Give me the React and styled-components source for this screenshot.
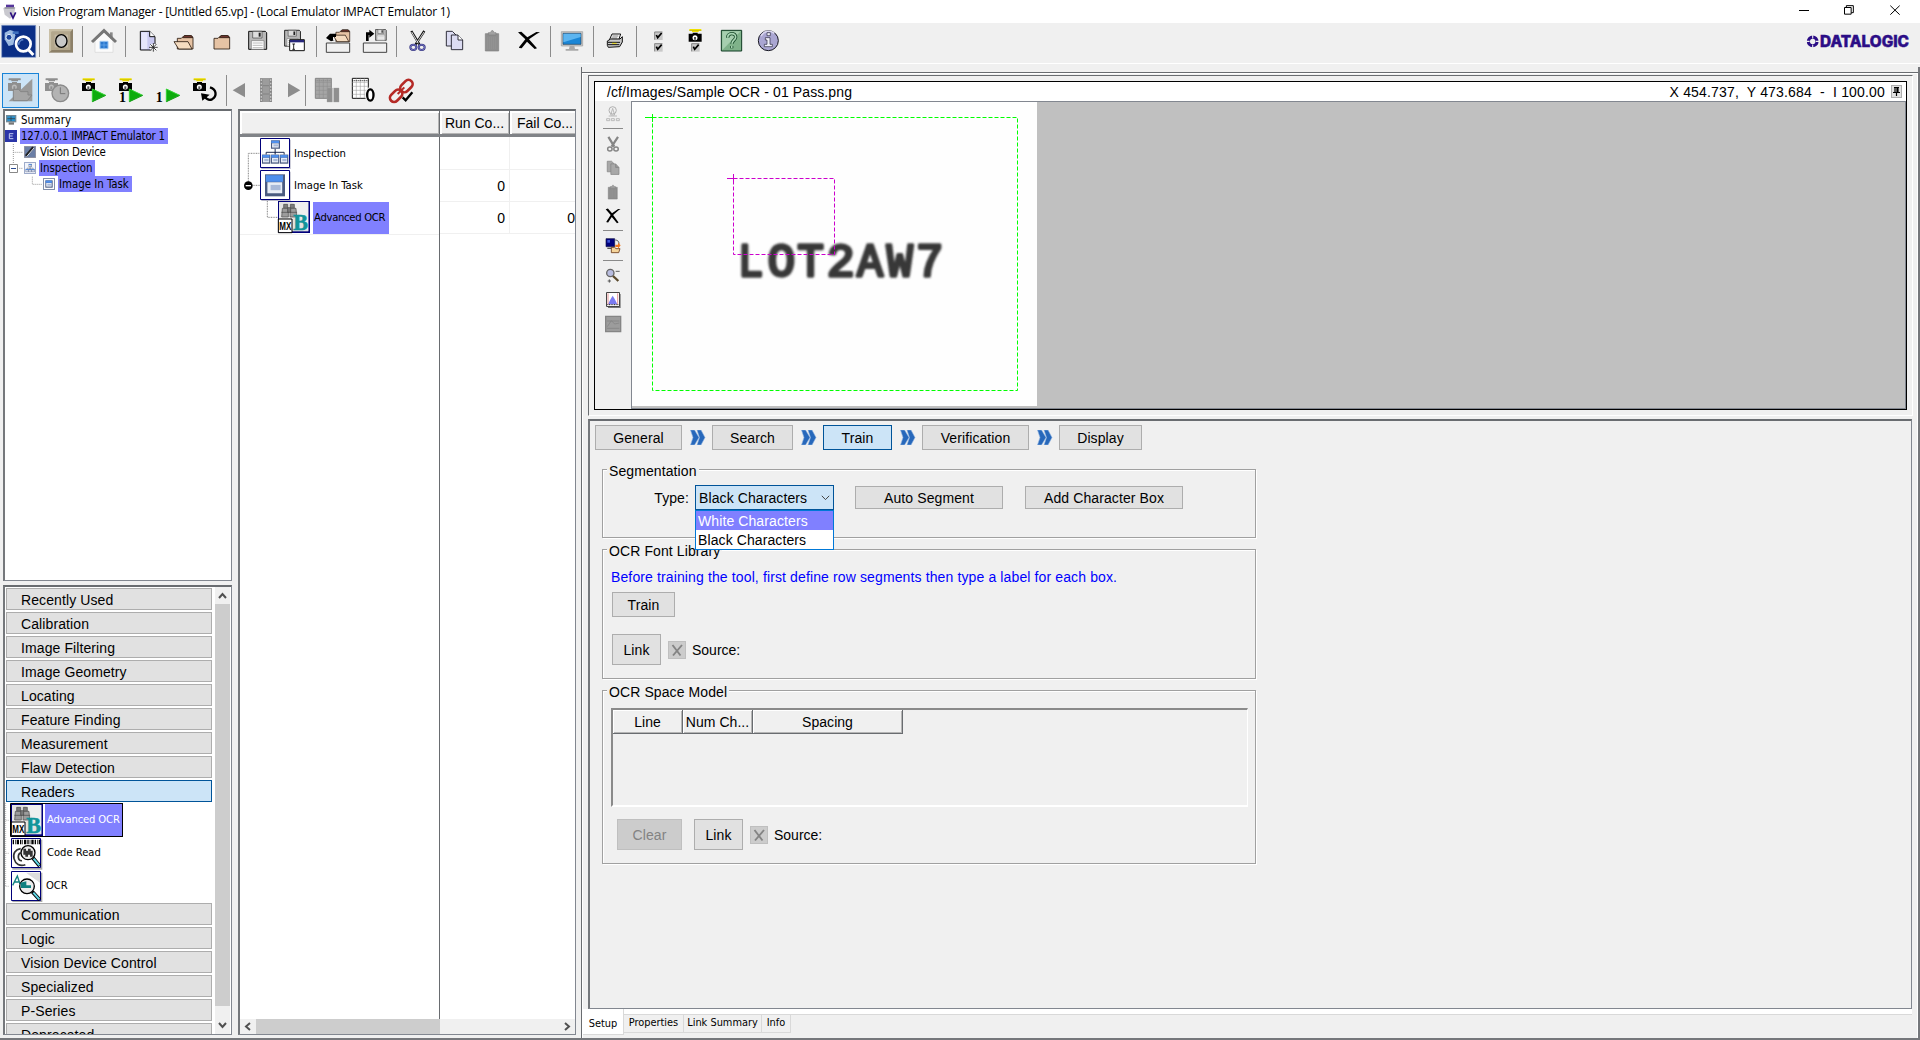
import React from "react";
import styled, { createGlobalStyle, css } from "styled-components";

const Global = createGlobalStyle`
  *, *::before, *::after { box-sizing: border-box; }
  body { margin: 0; background: #f0f0f0; overflow: hidden; }
  svg { display: block; flex: none; }
`;

const arial = `"Liberation Sans", Arial, sans-serif`;
const tahoma = `"DejaVu Sans Condensed", "DejaVu Sans", Tahoma, sans-serif`;

/* ---------- frame ---------- */
const Window = styled.div`
  width: 1920px; height: 1040px; display: flex; flex-direction: column;
  background: #f0f0f0; color: #000; font: 14px/18px ${arial}; white-space: nowrap; overflow: hidden;
`;
const TitleBar = styled.header`
  height: 23px; flex: none; background: #fff; display: flex; align-items: center; padding-left: 3px;
`;
const TitleText = styled.div`
  flex: 1; margin-left: 4px; font: 12px/16px "Open Sans", "Noto Sans", sans-serif; letter-spacing: -0.235px;
`;
const MainBar = styled.div`
  height: 41px; flex: none; display: flex; align-items: flex-start; padding: 1px 8px 0 0; border-bottom: 1px solid #fff;
`;
const Logo = styled.svg`margin-top: 10px;`;
const Spacer = styled.div`flex: 1;`;
const Separator = styled.i`
  width: 6px; height: 31px; flex: none; margin-top: ${(p) => p.$top || 0}px;
  border-left: 2px solid transparent; background: linear-gradient(90deg, #8c8c8c 1px, transparent 1px) padding-box;
`;
const Body = styled.div`flex: 1; min-height: 0; display: flex; border-bottom: 2px solid #75777b;`;
const LeftSide = styled.div`width: 581px; flex: none; display: flex; flex-direction: column; padding-left: 3px;`;
const RunBar = styled.div`
  height: 45px; flex: none; display: flex; align-items: flex-start; padding-top: 9px; margin-left: -1px;
`;
const RunButton = styled.div`
  height: 35px; flex: none;
  ${(p) => p.$on && css`background: #cce4f7; box-shadow: inset 0 0 0 1px #1883d7;`}
`;
const Panes = styled.div`flex: 1; min-height: 0; display: flex; gap: 6px;`;
const Column = styled.div`width: 229px; display: flex; flex-direction: column; gap: 4px; padding-bottom: 3px;`;
const Sunken = styled.div`
  background: #fff; border: 1px solid #828790; border-top: 2px solid #696c70; border-left: 2px solid #75787c;
  overflow: hidden;
`;

/* ---------- project tree ---------- */
const TreePane = styled(Sunken)`height: 472px; flex: none; display: flex; padding: 1px 0 0 0;`;
const TreeRow = styled.div`height: 16px; display: flex; align-items: center; padding-left: ${(p) => p.$indent}px;`;
const TreeLabel = styled.span`
  height: 16px; padding: 0 3px 0 1px; margin-left: 3px; font: 11.4px/16px ${tahoma};
  letter-spacing: ${(p) => p.$ls || 0}px;
  background: ${(p) => (p.$on ? "#8080ff" : "transparent")};
`;
const TreeBody = styled.div`flex: 1; display: flex; flex-direction: column;`;
const TreeLines = styled.div`width: 0; height: 0; overflow: visible;`;

/* ---------- toolbox ---------- */
const ToolPane = styled(Sunken)`flex: 1; min-height: 0; display: flex;`;
const ToolList = styled.div`
  width: 208px; padding: 1px 0 0 1px; display: flex; flex-direction: column; gap: 2px; overflow: hidden;
`;
const Category = styled.div`
  height: 22px; flex: none; width: 206px; padding-left: 14px; line-height: 22px; letter-spacing: 0.1px;
  background: ${(p) => (p.$on ? "#cce4f7" : "#e1e1e1")};
  border: 1px solid ${(p) => (p.$on ? "#005499" : "#adadad")};
`;
const Tools = styled.div`height: 99px; flex: none; display: flex; margin: -1px 0 -1px -1px;`;
const ToolNames = styled.div`display: flex; flex-direction: column;`;
const ToolName = styled.div`
  height: 33px; display: flex; align-items: center; font: 11.1px/16px ${tahoma}; padding-left: ${(p) => p.$left || 2}px;
  ${(p) => p.$on && css`
    height: 34px; width: 78px; color: #fff; background: #8080ff; border: 1px solid #000; border-left: 0;
    letter-spacing: -0.12px;
  `}
`;
const VScroll = styled.div`
  width: 15px; margin-left: 2px; background: #f0f0f0; display: flex; flex-direction: column; align-items: stretch;
`;
const VThumb = styled.div`height: 402px; background: #cdcdcd;`;

/* ---------- task table ---------- */
const TaskPane = styled(Sunken)`width: 338px; display: flex; flex-direction: column; margin-bottom: 3px;`;
const TaskHead = styled.div`
  height: 26px; flex: none; display: flex; border-bottom: 3px solid #808387; background: #f0f0f0;
`;
const HeadCell = styled.div`
  width: ${(p) => p.$w}px; flex: none; padding: 3px 0 0 ${(p) => p.$left || 0}px; text-align: ${(p) => p.$align || "center"};
  border-right: 1px solid #696c70; box-shadow: inset 1px 1px #fff, inset 2px 2px #fff, inset -1px -1px #b5b5b5; overflow: hidden;
`;
const TaskGrid = styled.div`flex: 1; display: flex;`;
const TaskCol = styled.div`
  width: ${(p) => p.$w}px; flex: none; display: flex; flex-direction: column;
  border-right: ${(p) => (p.$line ? "1px solid #696c70" : "0")};
`;
const TaskTree = styled.div`display: flex; height: 98px; border-bottom: 1px solid #f0f0f0;`;
const TaskNames = styled.div`display: flex; flex-direction: column; padding-top: 1px;`;
const TaskName = styled.div`
  height: 32px; flex: none; display: flex; align-items: center; font: 11.2px/16px ${tahoma}; margin-left: ${(p) => p.$left}px;
  ${(p) => p.$on && css`width: 76px; padding-left: 1px; background: #8080ff; letter-spacing: -0.3px;`}
`;
const NumCell = styled.div`
  height: ${(p) => p.$h || 32}px; padding: 1px 4px 0 0; display: flex; align-items: center; justify-content: flex-end;
  border-bottom: 1px solid #f0f0f0; border-right: ${(p) => (p.$edge ? "1px solid #f0f0f0" : "0")};
`;
const HScroll = styled.div`height: 15px; flex: none; background: #f0f0f0; display: flex;`;
const HThumb = styled.div`width: 184px; background: #cdcdcd;`;

/* ---------- right side ---------- */
const RightSide = styled.div`
  flex: 1; margin-top: 3px; border-left: 1px solid #696c70; border-right: 2px solid #75777b; padding-top: 5px; display: flex;
`;
const RightInner = styled.div`
  flex: 1; border-top: 1px solid #696c70; box-shadow: inset 1px 1px #fff, inset -1px 0 #fff; display: flex; flex-direction: column;
`;
const ImageFrame = styled.div`
  height: 341px; flex: none; margin: 2px 5px 0 6px; padding: 5px; border-left: 1px solid #696c70; border-top: 1px solid #696c70;
  border-right: 1px solid #fff; border-bottom: 1px solid #fff;
`;
const ImageBox = styled.div`
  width: 1313px; height: 329px; border: 1px solid #000; display: flex; flex-direction: column; background: #fff;
`;
const ImageTitle = styled.div`height: 19px; flex: none; display: flex; align-items: center; padding: 0 4px 0 12px;`;
const ImagePath = styled.span`letter-spacing: 0.11px;`;
const Coords = styled.div`margin-left: auto; margin-right: 6px; white-space: pre; letter-spacing: 0.17px;`;
const PinBox = styled.div`width: 11px; height: 13px; background: #e1e1e1; border: 1px solid #adadad;`;
const ImageBody = styled.div`flex: 1; display: flex; min-height: 0;`;
const ImageTools = styled.div`width: 36px; background: #f0f0f0; display: flex; flex-direction: column;`;
const Viewport = styled.div`flex: 1; background: #c0c0c0; border: 1px solid #828790;`;

const Editor = styled.div`
  height: 590px; flex: none; margin: 3px 6px 0 6px; border: 1px solid #828790; border-left: 2px solid #75787c; border-top: 2px solid #696c70;
  padding: 4px 0 0 5px;
`;
const Steps = styled.div`display: flex; height: 25px; align-items: center;`;
const Button = styled.div`
  width: ${(p) => p.$w}px; height: ${(p) => p.$h || 25}px; flex: none; display: flex; align-items: center; justify-content: center;
  margin-left: ${(p) => p.$left || 0}px; background: #e1e1e1; border: 1px solid #adadad; letter-spacing: 0.1px;
  ${(p) => p.$on && css`background: #cce4f7; border-color: #005499;`}
  ${(p) => p.$off && css`background: #cccccc; border-color: #bfbfbf; color: #838383;`}
`;
const Group = styled.section`
  width: 654px; height: ${(p) => p.$h}px; margin: ${(p) => p.$top}px 0 0 7px; border: 1px solid #a0a0a0;
  box-shadow: 1px 1px #fff, inset 1px 1px #fff; display: flex; flex-direction: column; align-items: flex-start;
`;
const Legend = styled.div`
  height: 18px; flex: none; margin: -9px 0 0 4px; padding: 1px 2px 0; background: #f0f0f0; letter-spacing: 0.1px;
`;
const Row = styled.div`
  display: flex; align-items: center; flex: none; height: ${(p) => p.$h}px; margin: ${(p) => p.$top}px 0 0 ${(p) => p.$left || 0}px;
`;
const TypeLabel = styled.span`width: 86px; text-align: right; margin-right: 6px; letter-spacing: 0.1px;`;
const Select = styled.div`
  position: relative; width: 139px; height: 25px; background: #cce4f7; border: 1px solid #005499;
  display: flex; align-items: center; justify-content: space-between; padding: 0 3px 0 3px; letter-spacing: 0.1px;
`;
const Popup = styled.div`
  position: absolute; left: -1px; top: 24px; width: 139px; border: 1px solid #0078d7; background: #fff; z-index: 2;
`;
const Option = styled.div`
  height: 19px; line-height: 20px; padding-left: 2px;
  ${(p) => p.$on && css`background: #8080ff; color: #fff;`}
`;
const Hint = styled.div`height: 18px; margin: 9px 0 0 8px; color: #0000ff; letter-spacing: 0.125px;`;
const ClearBox = styled.div`
  width: 18px; height: 18px; margin: 0 6px 0 7px; background: #ccc; border: 1px solid #bfbfbf;
`;
const SpaceTable = styled.div`
  width: 637px; height: 99px; margin: 8px 0 0 8px; border-top: 2px solid #8a8a8a; border-left: 2px solid #8a8a8a;
  border-right: 1px solid #fff; border-bottom: 2px solid #fff; display: flex; align-items: flex-start;
`;
const SpaceHead = styled.div`
  width: ${(p) => p.$w}px; height: 24px; padding-top: 3px; text-align: center; overflow: hidden; letter-spacing: 0.05px;
  border-right: 1px solid #696c70; border-bottom: 1px solid #696c70;
  box-shadow: inset 1px 1px #fff, inset -1px -1px #b5b5b5;
`;
const Tabs = styled.div`
  height: 29px; flex: none; display: flex; align-items: flex-start; margin: 0 6px 0 1px;
  background: linear-gradient(#fff 5px, #d9d9d9 5px, #d9d9d9 6px, transparent 6px);
`;
const Tab = styled.div`
  width: ${(p) => p.$w}px; height: 19px; margin-top: 5px; border: 1px solid #d9d9d9; border-left: 0; text-align: center;
  font: 10.9px/16px ${tahoma};
  ${(p) => p.$on && css`height: 26px; margin-top: 0; padding-top: 7px; background: #fff; border-top: 0;`}
`;

/* ---------- icons: one drawing unit is a third of a pixel ---------- */
const Art = ({ x, y, w, h, children, ...rest }) => (
  <svg width={w} height={h} viewBox={`${x} ${y} ${w * 3} ${h * 3}`} {...rest}>{children}</svg>
);
const BarIcon = ({ x, children }) => <Art x={x} y={72} w={37} h={35}>{children}</Art>;

const Camera = ({ x, y, gray }) => (
  <g transform={`translate(${x} ${y})`}>
    <path d="M2 0h36v5h-8v4h-20v-4H2z" fill={gray ? "#8f8f8f" : "#f0e000"} />
    <path d="M2 3h36v3H2z" fill={gray ? "#8f8f8f" : "#b0a800"} opacity=".6" />
    <path d="M0 14h12v-3h15v3h12v24H0z" fill={gray ? "#8f8f8f" : "#000"} />
    <circle cx="19" cy="26" r="7.5" fill={gray ? "#bdbdbd" : "#fff"} />
    <path d="M16 24h6v8h-6z" fill={gray ? "#8f8f8f" : "#555"} />
  </g>
);
const Play = ({ x, y }) => (
  <g>
    <path d={`M${x} ${y}v38l40-19z`} fill="#0dac0d" stroke="#32d232" strokeWidth="3" />
    <path d={`M${x} ${y + 38}l40-19`} stroke="#0a7d0a" strokeWidth="2" />
  </g>
);
const Folder = ({ x, y, open }) => (
  <g transform={`translate(${x} ${y})`} stroke="#2a1a10" strokeWidth="2.5" strokeLinejoin="round">
    <path d="M2 42V10h12l8-8h20l7 5v35z" fill="#e6c3a4" />
    <path d="M24 2h21l3 6H18z" fill="#7a3a34" />
    {open && <path d="M-8 20h42l12 22H6z" fill="#f5dcc0" />}
  </g>
);
const Floppy = ({ x, y, s = 1 }) => (
  <g transform={`translate(${x} ${y}) scale(${s})`}>
    <path d="M1 1h50l4 4v50H1z" fill="#b8b8b8" stroke="#111" strokeWidth="3" />
    <path d="M13 1h28v20H13z" fill="#dedede" stroke="#444" strokeWidth="2" />
    <path d="M31 5h6v12h-6z" fill="#222" />
    <path d="M9 29h38v26H9z" fill="#fff" stroke="#777" strokeWidth="2" />
    <path d="M13 36h30M13 43h30M13 50h30" stroke="#999" strokeWidth="2" />
  </g>
);
const Check = ({ x, y }) => (
  <g transform={`translate(${x} ${y})`}>
    <path d="M0 0h25v25H0z" fill="#c8c8c8" />
    <path d="M1 24V1h23" fill="none" stroke="#888" strokeWidth="3" />
    <path d="M6 10l4 8L22 4" fill="none" stroke="#000" strokeWidth="5" />
  </g>
);
const Scissors = ({ x, y, s = 1, gray }) => (
  <g transform={`translate(${x} ${y}) scale(${s})`} fill="none" stroke={gray ? "#858585" : "#111"}>
    <path d="M7 2l24 40M46 2L20 42" strokeWidth={gray ? 9 : 7} />
    {!gray && <path d="M8 5l20 34M45 5L23 38" stroke="#fff" strokeWidth="2.5" />}
    <ellipse cx="13" cy="51" rx="9" ry="8" stroke={gray ? "#858585" : "#30307c"} strokeWidth="6" />
    <ellipse cx="38" cy="51" rx="9" ry="8" stroke={gray ? "#858585" : "#30307c"} strokeWidth="6" />
    {!gray && <><ellipse cx="13" cy="51" rx="9" ry="8" stroke="#9a9ae6" strokeWidth="2" /><ellipse cx="38" cy="51" rx="9" ry="8" stroke="#9a9ae6" strokeWidth="2" /></>}
  </g>
);
const Copy = ({ x, y, s = 1, gray }) => (
  <g transform={`translate(${x} ${y}) scale(${s})`} fill={gray ? "#a8a8a8" : "#dcdcf2"} stroke={gray ? "#808080" : "#22222e"} strokeWidth="2.8">
    <path d="M1 1h18l12 12v32H1z" />
    <path d="M16 12h20l14 15v29H16z" />
    <path d="M36 12v15h14" fill={gray ? "#999" : "#fff"} />
  </g>
);
const Paste = ({ x, y, s = 1 }) => (
  <g transform={`translate(${x} ${y}) scale(${s})`} fill="#8e8e8e" stroke="#808080" strokeWidth="2">
    <path d="M1 10h40v52H1z" />
    <path d="M10 14V7h6l4-6h4l4 6h5v7z" fill="#a2a2a2" />
    <path d="M8 20v36M14 20v36M20 20v36M26 20v36M32 20v36" stroke="#9b9b9b" strokeWidth="1.5" />
  </g>
);
const Cross = ({ x, y, s = 1, sx = s }) => (
  <g transform={`translate(${x} ${y}) scale(${sx} ${s})`} fill="#000">
    <path d="M0 3l10-2 18 17L55 2l11 1-9 4-24 17 24 27-7 2-23-22L11 51l-7-1-1-2 19-24z" />
  </g>
);
const BlueWindow = ({ x, y, w, h }) => (
  <g>
    <rect x={x} y={y} width={w} height={h} fill="#4a5a80" />
    <rect x={x + w * 0.04} y={y + h * 0.04} width={w * 0.86} height={h * 0.3} fill="#4f8fec" />
    <rect x={x + w * 0.12} y={y + h * 0.36} width={w * 0.74} height={h * 0.5} fill="#e8edf6" />
    <rect x={x + w * 0.28} y={y + h * 0.48} width={w * 0.5} height={h * 0.24} fill="#a9b9d8" />
  </g>
);
const Network = ({ x, y, w, h }) => (
  <g transform={`translate(${x} ${y}) scale(${w / 80} ${h / 76})`}>
    <path d="M41 28v14M13 46v-7h56v7M41 39v7" stroke="#16224a" fill="none" strokeWidth="3" />
    <BlueWindow x={28} y={2} w={28} h={26} />
    <BlueWindow x={0} y={46} w={26} h={28} />
    <BlueWindow x={28} y={46} w={26} h={28} />
    <BlueWindow x={56} y={46} w={26} h={28} />
  </g>
);
const AdvancedArt = ({ x, y }) => (
  <g transform={`translate(${x} ${y})`}>
    <path d="M0 0h96v96H0z" fill="#00007a" />
    <path d="M3 3h88v88H3z" fill="#e3e3e3" />
    <path d="M42 3h49v88z" fill="#f4f4f4" opacity=".7" />
    <g fill="#7c7c7c" stroke="#484848" strokeWidth="2">
      <path d="M17 10h12v12H17zM37 10h12v12H37z" />
      <path d="M13 22h18v26H11zM36 22h18l2 26H36z" fill="#9c9c9c" />
      <path d="M29 20h9v14h-9z" />
      <path d="M10 34h22M35 34h22" />
    </g>
    <text x="46" y="86" fontFamily="Liberation Serif, serif" fontWeight="700" fontSize="72" fill="#12949a" stroke="#12949a" strokeWidth="2" textLength="44" lengthAdjust="spacingAndGlyphs">B</text>
    <path d="M1 54h41v41H1z" fill="#fff" stroke="#000" strokeWidth="3" />
    <text x="4" y="88" fontFamily="Liberation Sans, sans-serif" fontWeight="700" fontSize="33" fill="#000" textLength="36" lengthAdjust="spacingAndGlyphs">MX</text>
  </g>
);
const Stepper = () => (
  <svg width="30" height="15" viewBox="0 0 30 15">
    <path d="M8.500 0h4l4.500 7.500-4.500 7.500h-4l2.500-7.500zM15 0h4l4 7.500-4 7.500h-4l2.500-7.500z" fill="#2768bb" stroke="#8fb4e0" strokeWidth=".6" />
  </svg>
);

const MainIcons = () => (
  <MainBar>
    <BarIcon x={0}>
      <path d="M5 76h102v96H5z" fill="#0b2f86" stroke="#89a0cc" strokeWidth="2" />
      <path d="M14 98l16-8 12 4 4 12-6 28-14 4-12-20z" fill="#9cbbe2" />
      <path d="M38 94h18v8H38z" fill="#3f70be" />
      <circle cx="27" cy="112" r="9" fill="#1b449c" stroke="#d8e6f8" strokeWidth="3" />
      <circle cx="70" cy="132" r="22" fill="#0b2f86" stroke="#fff" strokeWidth="8" />
      <path d="M56 134a15 15 0 0 1 14-15" fill="none" stroke="#5b82c6" strokeWidth="5" />
      <path d="M86 150l14 15" stroke="#fff" strokeWidth="9" />
    </BarIcon>
    <Separator $top={2} />
    <BarIcon x={129}>
      <path d="M147 87h72v71h-72z" fill="#8c8068" />
      <path d="M147 87h72l-8 8h-56v55l-8 8z" fill="#c9bfa6" />
      <path d="M155 95h56v55h-56z" fill="#b3a78d" />
      <path d="M164 104h40v38h-40z" fill="#c4baa6" />
      <ellipse cx="184" cy="123" rx="17" ry="19" fill="#c8c8c8" stroke="#000" strokeWidth="4" />
    </BarIcon>
    <Separator $top={2} />
    <BarIcon x={258}>
      <path d="M285 122l27-26 27 26v35h-54z" fill="#fbfbfb" stroke="#d5d5d5" strokeWidth="2" />
      <path d="M330 97h8v18h-8z" fill="#888" />
      <path d="M276 126l36-34 36 34" fill="none" stroke="#777" strokeWidth="9" />
      <path d="M300 124h24v22h-24z" fill="#2b79cf" stroke="#9cc4ee" strokeWidth="3" />
      <path d="M312 124v22M300 135h24" stroke="#6fb0f0" strokeWidth="2" />
    </BarIcon>
    <Separator $top={2} />
    <BarIcon x={387}>
      <path d="M421 94h28l16 16v40h-44z" fill="#c9c9f0" stroke="#111" strokeWidth="3" />
      <path d="M424 97h18v50h-18z" fill="#e6e6fb" />
      <path d="M449 94v16h16" fill="#fff" stroke="#111" strokeWidth="3" />
      <circle cx="460" cy="142" r="11" fill="#fff" />
      <path d="M460 129v26M447 142h26M451 133l18 18M469 133l-18 18" stroke="#222" strokeWidth="2.6" />
    </BarIcon>
    <BarIcon x={498}><Folder x={530} y={105} open /></BarIcon>
    <BarIcon x={609}><Folder x={640} y={105} /></BarIcon>
    <BarIcon x={720}><Floppy x={745} y={93} /></BarIcon>
    <BarIcon x={831}>
      <Floppy x={853} y={90} s={0.88} />
      <path d="M869 119h44v33h-44z" fill="#fff" stroke="#111" strokeWidth="3" />
      <path d="M870 120h42v7h-42z" fill="#26267a" />
      <path d="M881 132v16M877 132h8M877 148h8" stroke="#000" strokeWidth="2.5" />
    </BarIcon>
    <Separator $top={2} />
    <BarIcon x={960}>
      <g transform="translate(1006 88) scale(.88)"><Folder x={0} y={0} open /></g>
      <path d="M979 129h70v28h-70z" fill="#f0f0f0" stroke="#444" strokeWidth="3" />
      <path d="M978 114l12-13h18v10h-9v10h5l-11 3z" fill="#000" />
    </BarIcon>
    <BarIcon x={1071}>
      <Floppy x={1126} y={88} s={0.6} />
      <path d="M1090 129h70v28h-70z" fill="#f0f0f0" stroke="#444" strokeWidth="3" />
      <path d="M1098 123v-26h10v-8l15 12-15 12v-8h-2v18z" fill="#000" />
    </BarIcon>
    <Separator $top={2} />
    <BarIcon x={0}><Scissors x={27} y={91} /></BarIcon>
    <BarIcon x={111}><Copy x={138} y={93} /></BarIcon>
    <BarIcon x={222}><Paste x={255} y={91} /></BarIcon>
    <BarIcon x={333}><Cross x={354} y={94} /></BarIcon>
    <Separator $top={2} />
    <BarIcon x={462}>
      <path d="M484 95h64v43h-64z" fill="#c9c9c9" stroke="#9b9b9b" strokeWidth="2" />
      <path d="M489 100h54v33h-54z" fill="#1b86d6" stroke="#27435c" strokeWidth="2" />
      <path d="M490 101h52v10l-52 16z" fill="#5db5f0" />
      <path d="M509 138h14l2 9h10v5h-38v-5h10z" fill="#a9a9a9" />
    </BarIcon>
    <Separator $top={2} />
    <BarIcon x={591}>
      <path d="M636 102h26l-6 18h-28z" fill="#fff" stroke="#111" strokeWidth="3" />
      <path d="M637 108h18M634 114h18" stroke="#333" strokeWidth="2" />
      <path d="M622 123l10-6h28l7-7v16l-8 14-34 2-3-6z" fill="#c9c9c9" stroke="#111" strokeWidth="3" />
      <path d="M624 127h36M624 134h34" stroke="#111" strokeWidth="3" />
      <path d="M636 130h14" stroke="#e6d71a" strokeWidth="3" />
    </BarIcon>
    <Separator $top={2} />
    <BarIcon x={720}><Check x={763} y={95} /><Check x={763} y={130} /></BarIcon>
    <BarIcon x={831}><Camera x={866} y={87} /><Check x={874} y={130} /></BarIcon>
    <BarIcon x={942}>
      <path d="M964 91h61v62h-61z" fill="#7fb28a" stroke="#0f3b22" strokeWidth="3" />
      <path d="M967 94h55l-55 56z" fill="#a6cfaf" />
      <path d="M983 113c0-16 24-16 24-2 0 10-11 9-11 20M995 138v7" fill="none" stroke="#174a2a" strokeWidth="10" />
      <path d="M983 113c0-16 24-16 24-2 0 10-11 9-11 20M995 138v6" fill="none" stroke="#a9d6b4" strokeWidth="5" />
    </BarIcon>
    <BarIcon x={1053}>
      <circle cx="1105" cy="122" r="30" fill="#aaa6d2" stroke="#15151f" strokeWidth="3" />
      <path d="M1083 108a26 26 0 0 1 40-8" fill="none" stroke="#d9d7ee" strokeWidth="5" />
      <path d="M1101 98h10v9h-10zM1096 113h14v20h7v7h-24v-7h8v-13h-5z" fill="#f0f0fa" stroke="#25253a" strokeWidth="2" />
    </BarIcon>
    <Spacer />
    <Logo width="106" height="18" viewBox="0 0 106 18">
      <circle cx="6.700" cy="7.400" r="4.300" fill="none" stroke="#2b0d86" strokeWidth="3.200" />
      <path d="M6.700 0v4.500M6.700 10.500v4M0 7.400h3.600M9.800 7.400h3.600" stroke="#f0f0f0" strokeWidth="1.100" />
      <text x="14" y="13" fontFamily="Inter, sans-serif" fontWeight="800" fontSize="15.300" fill="#2b0d86" stroke="#2b0d86" strokeWidth=".5" textLength="89" lengthAdjust="spacingAndGlyphs">DATALOGIC</text>
    </Logo>
  </MainBar>
);

const RunIcon = ({ x, w = 37, on, children }) => (
  <RunButton $on={on}><Art x={x} y={219} w={w} h={35}>{children}</Art></RunButton>
);
const Grid = ({ x, y, gray }) => (
  <g transform={`translate(${x} ${y})`} stroke={gray ? "#858585" : "#111"} strokeWidth="3" fill={gray ? "#a5a5a5" : "#fff"}>
    <path d="M1 1h48v60H1z" />
    <path d="M1 13h48M1 25h48M1 37h48M1 49h48M13 1v60M25 1v60M37 1v60" strokeWidth="1.600" stroke={gray ? "#8d8d8d" : "#999"} />
    <path d="M1 8h48" strokeWidth="3" strokeDasharray="3 3" />
  </g>
);
const One = ({ x, y }) => (
  <text x={x} y={y} fontFamily="Liberation Serif, serif" fontWeight="700" fontSize="42">1</text>
);
const RunIcons = () => (
  <RunBar>
    <RunIcon x={6} on>
      <Camera x={24} y={235} gray />
      <path d="M26 304L97 236v68z" fill="#9a9a9a" />
      <path d="M40 302v-34h16l6 7h22v10h12l-14 17z" fill="#a6a6a6" stroke="#858585" strokeWidth="3" />
    </RunIcon>
    <RunIcon x={117}>
      <Camera x={135} y={235} gray />
      <circle cx="181" cy="280" r="25" fill="#b3b3b3" stroke="#8a8a8a" strokeWidth="4" />
      <path d="M181 262v19h15" stroke="#777" strokeWidth="3" fill="none" />
    </RunIcon>
    <RunIcon x={228}><Camera x={246} y={235} /><Play x={277} y={267} /></RunIcon>
    <RunIcon x={339}><Camera x={357} y={235} /><One x={357} y={305} /><Play x={388} y={267} /></RunIcon>
    <RunIcon x={450}><One x={467} y={305} /><Play x={499} y={267} /></RunIcon>
    <RunIcon x={561}>
      <Camera x={579} y={235} />
      <path d="M630 262c20 6 22 26 6 36-8 4-16 0-22-8" fill="none" stroke="#000" strokeWidth="7" />
      <path d="M603 280l26 4-22 18z" fill="#000" />
    </RunIcon>
    <Separator $top={2} />
    <RunIcon x={690} w={20}><path d="M735 249v43l-37-21z" fill="#8d8d8d" /></RunIcon>
    <RunIcon x={750} w={33}>
      <path d="M780 234h36v72h-36z" fill="#9c9c9c" />
      <path d="M784 236v70M812 236v70" stroke="#858585" strokeWidth="7" />
      <path d="M784 238v68M812 238v68" stroke="#c6c6c6" strokeWidth="4" strokeDasharray="5 5" />
      <path d="M789 257h18M789 282h18" stroke="#777" strokeWidth="2" />
    </RunIcon>
    <RunIcon x={849} w={20}><path d="M864 249v43l37-21z" fill="#8d8d8d" /></RunIcon>
    <Separator $top={2} />
    <RunIcon x={927}>
      <Grid x={945} y={234} gray />
      <path d="M981 264h16v42h-16zM1001 264h16v42h-16z" fill="#8f8f8f" stroke="#a8a8a8" strokeWidth="1" />
    </RunIcon>
    <RunIcon x={1038}>
      <Grid x={1056} y={234} />
      <ellipse cx="1111" cy="285" rx="10" ry="18" fill="#f0f0f0" stroke="#f0f0f0" strokeWidth="12" />
      <ellipse cx="1111" cy="285" rx="9.500" ry="17" fill="#fff" stroke="#000" strokeWidth="7" />
    </RunIcon>
    <RunIcon x={1149}>
      <g fill="none" stroke="#b52a26" strokeWidth="8">
        <rect x="1198" y="246" width="42" height="25" rx="12.500" transform="rotate(-45 1219 258)" />
        <rect x="1167" y="275" width="42" height="25" rx="12.500" transform="rotate(-45 1188 287)" />
        <path d="M1193 282l20-20" strokeWidth="6" />
      </g>
      <path d="M1208 292l9 9 20-24" fill="none" stroke="#000" strokeWidth="7" />
    </RunIcon>
  </RunBar>
);

const ProjectTree = () => (
  <TreePane>
    <TreeLines>
      <svg width="60" height="90" viewBox="15 336 180 270">
        <path d="M40 432v84M40 457h30M58 505h12M97 530v23h28" fill="none" stroke="#999" strokeWidth="3" strokeDasharray="3 3" />
        <path d="M28.500 493.500h24v24h-24z" fill="#fff" stroke="#888" strokeWidth="3" />
        <path d="M33 505.500h15" stroke="#2a4a90" strokeWidth="3" />
      </svg>
    </TreeLines>
    <TreeBody>
      <TreeRow $indent={1}>
        <Art x={18} y={345} w={11} h={10}>
          <path d="M18 345h31v22H18z" fill="#6e8898" /><path d="M22 349h23v14H22z" fill="#2791cf" />
          <path d="M22 356h23M33 349v14" stroke="#333" strokeWidth="2" /><path d="M26 367h16v7H26z" fill="#777" />
        </Art>
        <TreeLabel $ls={0.1}>Summary</TreeLabel>
      </TreeRow>
      <TreeRow $indent={0}>
        <Art x={15} y={390} w={12} h={12}>
          <path d="M15 390h36v36H15z" fill="#2b35a8" />
          <path d="M40 401H28v15h12M28 408h10" fill="none" stroke="#c2cbf3" strokeWidth="3" />
        </Art>
        <TreeLabel $on $ls={-0.2}>127.0.0.1 IMPACT Emulator 1</TreeLabel>
      </TreeRow>
      <TreeRow $indent={19}>
        <Art x={72} y={438} w={12} h={12}>
          <path d="M73 439h34v34H73z" fill="#6b7fa6" stroke="#8c8c9c" strokeWidth="3" />
          <path d="M100 442l-22 26" stroke="#222" strokeWidth="8" /><path d="M102 444l-22 26" stroke="#dfe6f2" strokeWidth="3" />
        </Art>
        <TreeLabel $ls={-0.25}>Vision Device</TreeLabel>
      </TreeRow>
      <TreeRow $indent={19}>
        <Art x={72} y={486} w={12} h={12}>
          <path d="M73 487h34v34H73z" fill="#f2f5fb" stroke="#8c9cc0" strokeWidth="3" />
          <Network x={77} y={491} w={26} h={26} />
        </Art>
        <TreeLabel $on $ls={-0.05}>Inspection</TreeLabel>
      </TreeRow>
      <TreeRow $indent={38}>
        <Art x={129} y={534} w={12} h={12}>
          <path d="M130 535h34v34h-34z" fill="#fff" stroke="#6b7a9a" strokeWidth="3" />
          <BlueWindow x={136} y={541} w={22} h={22} />
        </Art>
        <TreeLabel $on $ls={-0.02}>Image In Task</TreeLabel>
      </TreeRow>
    </TreeBody>
  </TreePane>
);

const Arrow = ({ d, w, h }) => (
  <svg width={w} height={h} viewBox={`0 0 ${w} ${h}`}><path d={d} fill="none" stroke="#505050" strokeWidth="2" /></svg>
);
const before = ["Recently Used", "Calibration", "Image Filtering", "Image Geometry", "Locating", "Feature Finding", "Measurement", "Flaw Detection"];
const after = ["Communication", "Logic", "Vision Device Control", "Specialized", "P-Series", "Deprecated"];

const Toolbox = () => (
  <ToolPane>
    <ToolList>
      {before.map((n) => <Category key={n}>{n}</Category>)}
      <Category $on>Readers</Category>
      <Tools>
        <Art x={15} y={699} w={40} h={99}>
          <path d="M17 699v250M17 751h12M17 850h10M17 949h10" stroke="#aaa" strokeWidth="2.500" strokeDasharray="3 3" fill="none" />
          <path d="M31 699h110v102H31z" fill="#fff" />
          <path d="M135 700.500H31.500v99H135" fill="none" stroke="#000" strokeWidth="3" />
          <AdvancedArt x={33} y={702} />
          <path d="M37 809h90v90H37z" fill="#aaa" />
          <path d="M34.500 805.500h87v87h-87z" fill="#fff" stroke="#00007a" strokeWidth="3" />
          <path d="M38 816h82" stroke="#000" strokeWidth="13" strokeDasharray="4 3 2 3 7 3" />
          <path d="M62 836c-16 2-24 14-20 30s18 24 34 18M62 848c-10 4-10 26 4 24" fill="none" stroke="#333" strokeWidth="5" />
          <circle cx="84" cy="848" r="21" fill="#ececec" stroke="#000" strokeWidth="4" />
          <path d="M70 836h8v6h6v-6h8v6h6v18h-8v-6h-6v6h-8v-6h-6z" fill="#333" />
          <path d="M99 864l20 24" stroke="#000" strokeWidth="11" /><path d="M101 866l17 20" stroke="#5fd7e6" strokeWidth="6" />
          <path d="M37 908h90v90H37z" fill="#aaa" />
          <path d="M34.500 904.500h87v87h-87z" fill="#fff" stroke="#00007a" strokeWidth="3" />
          <path d="M78 908h42v30z" fill="#ddd" />
          <path d="M38 946l14-28 8 24M42 936h14" fill="none" stroke="#108080" strokeWidth="4" />
          <circle cx="81" cy="949" r="22" fill="#ececec" stroke="#000" strokeWidth="4" />
          <path d="M61 938l18-4v12h14v8H63z" fill="#108080" />
          <path d="M97 965l22 24" stroke="#000" strokeWidth="11" /><path d="M100 968l18 20" stroke="#5fd7e6" strokeWidth="6" />
        </Art>
        <ToolNames>
          <ToolName $on>Advanced OCR</ToolName>
          <ToolName>Code Read</ToolName>
          <ToolName $left={1}>OCR</ToolName>
        </ToolNames>
      </Tools>
      {after.map((n) => <Category key={n}>{n}</Category>)}
    </ToolList>
    <VScroll>
      <Arrow w={15} h={17} d="M4 11l3.500-4 3.500 4" />
      <VThumb />
      <Spacer />
      <Arrow w={15} h={18} d="M4 7l3.500 4 3.500-4" />
    </VScroll>
  </ToolPane>
);

const TaskTable = () => (
  <TaskPane>
    <TaskHead>
      <HeadCell $w={200} />
      <HeadCell $w={70}>Run Co...</HeadCell>
      <HeadCell $w={72} $align="left" $left={7}>Fail Co...</HeadCell>
    </TaskHead>
    <TaskGrid>
      <TaskCol $w={200} $line>
        <TaskTree>
          <Art x={30} y={204} w={81} h={97}>
            <path d="M55 340V253h34M63 349h27M112 396v49h32" fill="none" stroke="#888" strokeWidth="3" strokeDasharray="3 2" />
            <circle cx="55" cy="350" r="13" fill="#000" /><path d="M47 350h16" stroke="#fff" strokeWidth="4" />
            <path d="M94 212h88v88H94zM94 308h88v88H94z" fill="#b9b9c9" />
            <path d="M91.500 208.500h87v87h-87zM91.500 304.500h87v87h-87z" fill="#fff" stroke="#00007a" strokeWidth="3" />
            <Network x={96} y={212} w={77} h={74} />
            <BlueWindow x={105} y={316} w={60} h={66} />
            <AdvancedArt x={144} y={396} />
          </Art>
          <TaskNames>
            <TaskName $left={-27}>Inspection</TaskName>
            <TaskName $left={-27}>Image In Task</TaskName>
            <TaskName $left={-8} $on>Advanced OCR</TaskName>
          </TaskNames>
        </TaskTree>
      </TaskCol>
      <TaskCol $w={70}>
        <NumCell $edge $h={33} /><NumCell $edge>0</NumCell><NumCell $edge>0</NumCell>
      </TaskCol>
      <TaskCol $w={69}>
        <NumCell $h={33} /><NumCell /><NumCell>0</NumCell>
      </TaskCol>
    </TaskGrid>
    <HScroll>
      <Arrow w={16} h={15} d="M10 4L6 7.500 10 11" />
      <HThumb />
      <Spacer />
      <Arrow w={17} h={15} d="M7 4l4 3.500L7 11" />
    </HScroll>
  </TaskPane>
);

const ToolArt = ({ y, h, children }) => <Art x={45} y={y} w={36} h={h}>{children}</Art>;
const ToolRule = ({ y }) => <ToolArt y={y} h={5}><path d={`M69 ${y + 7.5}h60`} stroke="#8a8a8a" strokeWidth="3" /></ToolArt>;

const glyphs = [["L", 474, 76], ["O", 563, 82], ["T", 652, 80], ["2", 740, 84], ["A", 831, 78], ["W", 920, 78], ["7", 1008, 82]];
const ImagePanel = () => (
  <ImageFrame>
    <ImageBox>
      <ImageTitle>
        <ImagePath>/cf/Images/Sample OCR - 01 Pass.png</ImagePath>
        <Coords>{"X 454.737,  Y 473.684  -  I 100.00"}</Coords>
        <PinBox>
          <svg width="9" height="11" viewBox="0 0 9 11"><path d="M2 1.500h5M3 1v5M6 1v5M5 1v5M1 6.500h7M4.500 6v4" stroke="#000" strokeWidth="1.200" fill="none" /></svg>
        </PinBox>
      </ImageTitle>
      <ImageBody>
        <ImageTools>
          <ToolArt y={93} h={25}>
            <g fill="none" stroke="#b0b0b0" strokeWidth="3">
              <circle cx="98" cy="121" r="11" /><path d="M98 115l-6 20h12zM86 138h25M80 146h9v6h-9zM94 146h9v6h-9zM109 146h9v6h-9z" strokeWidth="2.500" />
            </g>
          </ToolArt>
          <ToolRule y={168} />
          <ToolArt y={183} h={25}><Scissors x={80} y={199} s={0.74} gray /></ToolArt>
          <ToolArt y={258} h={24}><Copy x={81} y={273} s={0.72} gray /></ToolArt>
          <ToolArt y={330} h={24}><Paste x={84} y={345} s={0.68} /></ToolArt>
          <ToolArt y={402} h={24}><Cross x={77} y={415} s={0.84} sx={0.68} /></ToolArt>
          <ToolRule y={474} />
          <ToolArt y={489} h={25}>
            <path d="M78 506h26v24H78z" fill="#00007c" stroke="#15154a" strokeWidth="2" />
            <path d="M82 510h8v8h-8z" fill="#3b52d6" /><path d="M82 533h18v4H82z" fill="#555" />
            <path d="M94 548v-16h10l4 4h12l-4 12z" fill="#f5d49a" stroke="#6a3a1a" strokeWidth="2.500" />
            <path d="M106 510c10 1 12 8 10 14" fill="none" stroke="#333" strokeWidth="2.500" />
            <path d="M106 524h8v-6l8 8-8 10v-5h-8z" fill="#f07820" />
          </ToolArt>
          <ToolRule y={564} />
          <ToolArt y={579} h={25}>
            <circle cx="91" cy="609" r="11" fill="#b9bde0" stroke="#666" strokeWidth="4" />
            <path d="M99 618l16 15" stroke="#5b4a2c" strokeWidth="7" /><path d="M107 604h12M83 633h10M88 628v10" stroke="#444" strokeWidth="2.500" />
          </ToolArt>
          <ToolArt y={654} h={24}>
            <path d="M84 672h38v42H84z" fill="#777" />
            <path d="M79.500 667.500h39v42h-39z" fill="#fff" stroke="#444" strokeWidth="3" />
            <path d="M84 703l8-16 6-10 6 10 8 16z" fill="#7a7af0" />
            <path d="M84 670v34M113 670v34" stroke="#e08080" strokeWidth="2.500" /><path d="M82 704h34" stroke="#222" strokeWidth="3" strokeDasharray="3 2" />
          </ToolArt>
          <ToolArt y={726} h={24}>
            <path d="M77 739h45v46H77z" fill="#9c9c9c" stroke="#858585" strokeWidth="4" />
            <path d="M81 753h37M82 770l12-18 10 10 14-3M81 775h37" fill="none" stroke="#808080" strokeWidth="2" />
          </ToolArt>
        </ImageTools>
        <Viewport>
          <svg width="405" height="304" viewBox="156 96 1215 912">
            <defs><filter id="soft" x="-5%" y="-20%" width="110%" height="140%"><feGaussianBlur stdDeviation="2.400" /></filter></defs>
            <path d="M156 96h1215v912H156z" fill="#fefefe" />
            <g fontFamily="Liberation Mono, monospace" fontSize="138" fill="#383838" stroke="#383838" strokeWidth="10" strokeLinejoin="round" filter="url(#soft)">
              {glyphs.map(([c, x, w]) => (
                <text key={x} x={x} y="617" textLength={w} lengthAdjust="spacingAndGlyphs">{c}</text>
              ))}
            </g>
            <g fill="none" strokeWidth="3">
              <g stroke="#00ff00">
                <path d="M217.500 142.500H1312.500V961.500H217.500z" strokeDasharray="12 6" />
                <path d="M195 142.500h30M217.500 132v24" />
              </g>
              <g stroke="#cc00cc">
                <path d="M460.500 325.500H763.500V553.500H460.500z" strokeDasharray="12 6" />
                <path d="M441 325.500h27M460.500 312v24" />
              </g>
            </g>
          </svg>
        </Viewport>
      </ImageBody>
    </ImageBox>
  </ImageFrame>
);

const SmallX = () => (
  <ClearBox>
    <svg width="16" height="16" viewBox="0 0 16 16"><path d="M3.500 3l8 10.500M13 3L4 13.500" stroke="#848484" strokeWidth="1.900" /></svg>
  </ClearBox>
);

const EditorPanel = () => (
  <Editor>
    <Steps>
      <Button $w={87}>General</Button><Stepper />
      <Button $w={81}>Search</Button><Stepper />
      <Button $w={69} $on>Train</Button><Stepper />
      <Button $w={107}>Verification</Button><Stepper />
      <Button $w={83}>Display</Button>
    </Steps>
    <Group $top={19} $h={69}>
      <Legend>Segmentation</Legend>
      <Row $top={6} $h={25}>
        <TypeLabel>Type:</TypeLabel>
        <Select>
          <span>Black Characters</span>
          <svg width="9" height="6" viewBox="0 0 9 6"><path d="M.8 .8l3.700 3.800L8.200 .8" fill="none" stroke="#444" /></svg>
          <Popup>
            <Option $on>White Characters</Option>
            <Option>Black Characters</Option>
          </Popup>
        </Select>
        <Button $w={148} $h={23} $left={21}>Auto Segment</Button>
        <Button $w={158} $h={23} $left={22}>Add Character Box</Button>
      </Row>
    </Group>
    <Group $top={11} $h={130}>
      <Legend>OCR Font Library</Legend>
      <Hint>Before training the tool, first define row segments then type a label for each box.</Hint>
      <Row $top={6} $h={25} $left={9}><Button $w={63}>Train</Button></Row>
      <Row $top={17} $h={31} $left={9}>
        <Button $w={49} $h={31}>Link</Button><SmallX /><span>Source:</span>
      </Row>
    </Group>
    <Group $top={11} $h={174}>
      <Legend>OCR Space Model</Legend>
      <SpaceTable>
        <SpaceHead $w={70}>Line</SpaceHead>
        <SpaceHead $w={70}>Num Ch...</SpaceHead>
        <SpaceHead $w={150}>Spacing</SpaceHead>
      </SpaceTable>
      <Row $top={12} $h={31} $left={14}>
        <Button $w={65} $h={31} $off>Clear</Button>
        <Button $w={49} $h={31} $left={12}>Link</Button><SmallX /><span>Source:</span>
      </Row>
    </Group>
  </Editor>
);

export default function App() {
  return (
    <Window>
      <Global />
      <TitleBar>
        <Art x={9} y={12} w={16} h={16}>
          <path d="M10 24l10-4 26 2-4 24-12 10-16-12z" fill="#c9c9cf" />
          <path d="M18 14h24v8H18z" fill="#55359a" /><path d="M14 22h30v4H14z" fill="#8b8b95" />
          <path d="M31 37l8 17 8-17" fill="none" stroke="#2c1080" strokeWidth="5" />
        </Art>
        <TitleText>Vision Program Manager - [Untitled 65.vp] - (Local Emulator IMPACT Emulator 1)</TitleText>
        <Art x={468} y={0} w={124} h={23}>
          <g fill="none" stroke="#000" strokeWidth="3">
            <path d="M477 31.500h30M613.500 22.500h20v20h-20zM619 22v-5h21v21h-6" />
          </g>
          <path d="M751 17l28 27M779 17l-28 27" stroke="#000" strokeWidth="3" />
        </Art>
      </TitleBar>
      <MainIcons />
      <Body>
        <LeftSide>
          <RunIcons />
          <Panes>
            <Column>
              <ProjectTree />
              <Toolbox />
            </Column>
            <TaskTable />
          </Panes>
        </LeftSide>
        <RightSide>
          <RightInner>
            <ImagePanel />
            <EditorPanel />
            <Tabs>
              <Tab $w={41} $on>Setup</Tab>
              <Tab $w={60}>Properties</Tab>
              <Tab $w={78}>Link Summary</Tab>
              <Tab $w={29}>Info</Tab>
            </Tabs>
          </RightInner>
        </RightSide>
      </Body>
    </Window>
  );
}
